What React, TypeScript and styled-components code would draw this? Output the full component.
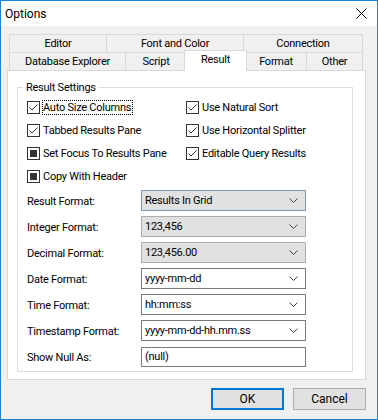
import React from "react";
import styled, { createGlobalStyle, css } from "styled-components";

const Global = createGlobalStyle`
  html, body { margin: 0; padding: 0; background: #f0f0f0; }
  * { box-sizing: border-box; }
  body { font-family: Roboto, "Liberation Sans", sans-serif; font-size: 11px; letter-spacing: -0.25px; color: #000; }
`;

const Window = styled.div`
  width: 378px;
  height: 420px;
  border: 1px solid #1883d7;
  background: #f0f0f0;
  display: flex;
  flex-direction: column;
`;

const TitleBar = styled.div`
  height: 25px;
  background: #fff;
  display: flex;
  align-items: center;
  justify-content: space-between;
  padding: 0 10px 0 4px;
`;

const Title = styled.span`
  font-size: 12px;
  line-height: 14px;
  letter-spacing: 0;
`;

const CloseIcon = styled.svg`
  width: 11px;
  height: 11px;
  display: block;
`;

const Body = styled.div`
  display: flex;
  flex-direction: column;
  padding: 8px 11px 9px 6px;
`;

const TabStrip = styled.div`
  display: flex;
  flex-direction: column;
  margin: 0 3px 0 2px;
`;

const TabRow = styled.div`
  display: flex;
  align-items: flex-start;
  height: 18px;
`;

const Tab = styled.div<{ $w: number; $active?: boolean; $last?: boolean }>`
  width: ${(p) => p.$w}px;
  height: 18px;
  display: flex;
  align-items: center;
  justify-content: center;
  border-top: 1px solid #d9d9d9;
  border-left: 1px solid #d9d9d9;
  ${(p) => p.$last && css`border-right: 1px solid #d9d9d9;`}
  background: #f0f0f0;
  line-height: 14px;
  white-space: nowrap;
  ${(p) =>
    p.$active &&
    css`
      position: relative;
      z-index: 1;
      width: ${p.$w + 4}px;
      margin: -2px -2px 0 -2px;
      height: 21px;
      background: #fff;
      border: 1px solid #d9d9d9;
      border-bottom: none;
      align-items: flex-start;
      padding-top: 2px;
    `}
`;

const Panel = styled.div`
  height: 310px;
  background: #fff;
  border: 1px solid #d9d9d9;
  padding: 10px 0 0 9px;
`;

const Group = styled.fieldset`
  margin: 0;
  width: 336px;
  height: 291px;
  border: 1px solid #dcdcdc;
  padding: 0 12px 0 9px;
  min-width: 0;
`;

const Legend = styled.legend`
  margin-left: -4px;
  padding: 0 3px;
  line-height: 13px;
  font-size: 11px;
`;

const CheckGrid = styled.div`
  display: grid;
  grid-template-columns: 159px 1fr;
  grid-auto-rows: 23px;
  padding-top: 2px;
`;

const CheckItem = styled.div`
  display: flex;
  align-items: center;
  gap: 2px;
`;

const Box = styled.span`
  width: 13px;
  height: 13px;
  border: 1px solid #333;
  background: #fff;
  display: flex;
  align-items: center;
  justify-content: center;
  flex: none;
`;

const Fill = styled.span`
  width: 7px;
  height: 7px;
  background: #333;
`;

const CheckLabel = styled.span<{ $focus?: boolean }>`
  border: 1px dotted ${(p) => (p.$focus ? "#000" : "transparent")};
  line-height: 13px;
  padding: 0 1px 0 0;
  white-space: nowrap;
`;

const FormGrid = styled.div`
  display: grid;
  grid-template-columns: 114px 165px;
  grid-auto-rows: 21px;
  row-gap: 5px;
  margin-top: 2px;
  align-items: center;
`;

const FieldLabel = styled.span`
  white-space: nowrap;
  padding-top: 1px;
`;

const Combo = styled.div<{ $kind: "hot" | "gray" | "white" }>`
  height: 21px;
  display: flex;
  align-items: center;
  justify-content: space-between;
  padding: 0 4px 0 3px;
  border: 1px solid
    ${(p) => (p.$kind === "hot" ? "#7a9ab6" : p.$kind === "gray" ? "#adadad" : "#7a7a7a")};
  background: ${(p) => (p.$kind === "white" ? "#fff" : "#e1e1e1")};
  white-space: nowrap;
`;

const Input = styled.div`
  height: 20px;
  display: flex;
  align-items: center;
  padding: 0 3px;
  border: 1px solid #7a7a7a;
  background: #fff;
`;

const Chevron = styled.svg`
  width: 9px;
  height: 5px;
  display: block;
  margin-right: 3px;
`;

const ButtonRow = styled.div`
  display: flex;
  justify-content: flex-end;
  gap: 9px;
  margin-top: 8px;
`;

const Button = styled.div<{ $default?: boolean }>`
  width: 73px;
  height: 22px;
  display: flex;
  align-items: center;
  justify-content: center;
  background: #e1e1e1;
  border: ${(p) => (p.$default ? "2px solid #0078d7" : "1px solid #adadad")};
  font-size: 12px;
  letter-spacing: 0;
`;

const Check = () => (
  <svg width="11" height="11" viewBox="0 0 11 11">
    <polyline points="1.5,5.5 4,8 9.5,2.5" fill="none" stroke="#333" strokeWidth="1" />
  </svg>
);

type CB = { label: string; state: "on" | "mixed"; focus?: boolean } | null;

const checks: CB[] = [
  { label: "Auto Size Columns", state: "on", focus: true },
  { label: "Use Natural Sort", state: "on" },
  { label: "Tabbed Results Pane", state: "on" },
  { label: "Use Horizontal Splitter", state: "on" },
  { label: "Set Focus To Results Pane", state: "mixed" },
  { label: "Editable Query Results", state: "on" },
  { label: "Copy With Header", state: "mixed" },
  null,
];

const fields: { label: string; value: string; kind: "hot" | "gray" | "white" | "input" }[] = [
  { label: "Result Format:", value: "Results In Grid", kind: "hot" },
  { label: "Integer Format:", value: "123,456", kind: "gray" },
  { label: "Decimal Format:", value: "123,456.00", kind: "gray" },
  { label: "Date Format:", value: "yyyy-mm-dd", kind: "white" },
  { label: "Time Format:", value: "hh:mm:ss", kind: "white" },
  { label: "Timestamp Format:", value: "yyyy-mm-dd-hh.mm.ss", kind: "white" },
  { label: "Show Null As:", value: "(null)", kind: "input" },
];

const row1 = [
  { t: "Editor", w: 97 },
  { t: "Font and Color", w: 137 },
  { t: "Connection", w: 120 },
];
const row2 = [
  { t: "Database Explorer", w: 116 },
  { t: "Script", w: 61 },
  { t: "Result", w: 59, active: true },
  { t: "Format", w: 61 },
  { t: "Other", w: 57 },
];

export default function App() {
  return (
    <>
      <Global />
      <Window>
        <TitleBar>
          <Title>Options</Title>
          <CloseIcon viewBox="0 0 11 11">
            <path d="M0.5 0.5 L10.5 10.5 M10.5 0.5 L0.5 10.5" stroke="#000" strokeWidth="1" />
          </CloseIcon>
        </TitleBar>
        <Body>
          <TabStrip>
            <TabRow>
              {row1.map((t, i) => (
                <Tab key={t.t} $w={t.w} $last={i === row1.length - 1}>
                  {t.t}
                </Tab>
              ))}
            </TabRow>
            <TabRow>
              {row2.map((t, i) => (
                <Tab key={t.t} $w={t.w} $active={t.active} $last={i === row2.length - 1}>
                  {t.t}
                </Tab>
              ))}
            </TabRow>
          </TabStrip>
          <Panel>
            <Group>
              <Legend>Result Settings</Legend>
              <CheckGrid>
                {checks.map((c, i) =>
                  c ? (
                    <CheckItem key={i}>
                      <Box>{c.state === "on" ? <Check /> : <Fill />}</Box>
                      <CheckLabel $focus={c.focus}>{c.label}</CheckLabel>
                    </CheckItem>
                  ) : (
                    <span key={i} />
                  )
                )}
              </CheckGrid>
              <FormGrid>
                {fields.map((f) => (
                  <React.Fragment key={f.label}>
                    <FieldLabel>{f.label}</FieldLabel>
                    {f.kind === "input" ? (
                      <Input>{f.value}</Input>
                    ) : (
                      <Combo $kind={f.kind}>
                        <span>{f.value}</span>
                        <Chevron viewBox="0 0 9 5">
                          <polyline points="0.5,0.5 4.5,4.5 8.5,0.5" fill="none" stroke="#444" strokeWidth="1" />
                        </Chevron>
                      </Combo>
                    )}
                  </React.Fragment>
                ))}
              </FormGrid>
            </Group>
          </Panel>
          <ButtonRow>
            <Button $default>OK</Button>
            <Button>Cancel</Button>
          </ButtonRow>
        </Body>
      </Window>
    </>
  );
}
